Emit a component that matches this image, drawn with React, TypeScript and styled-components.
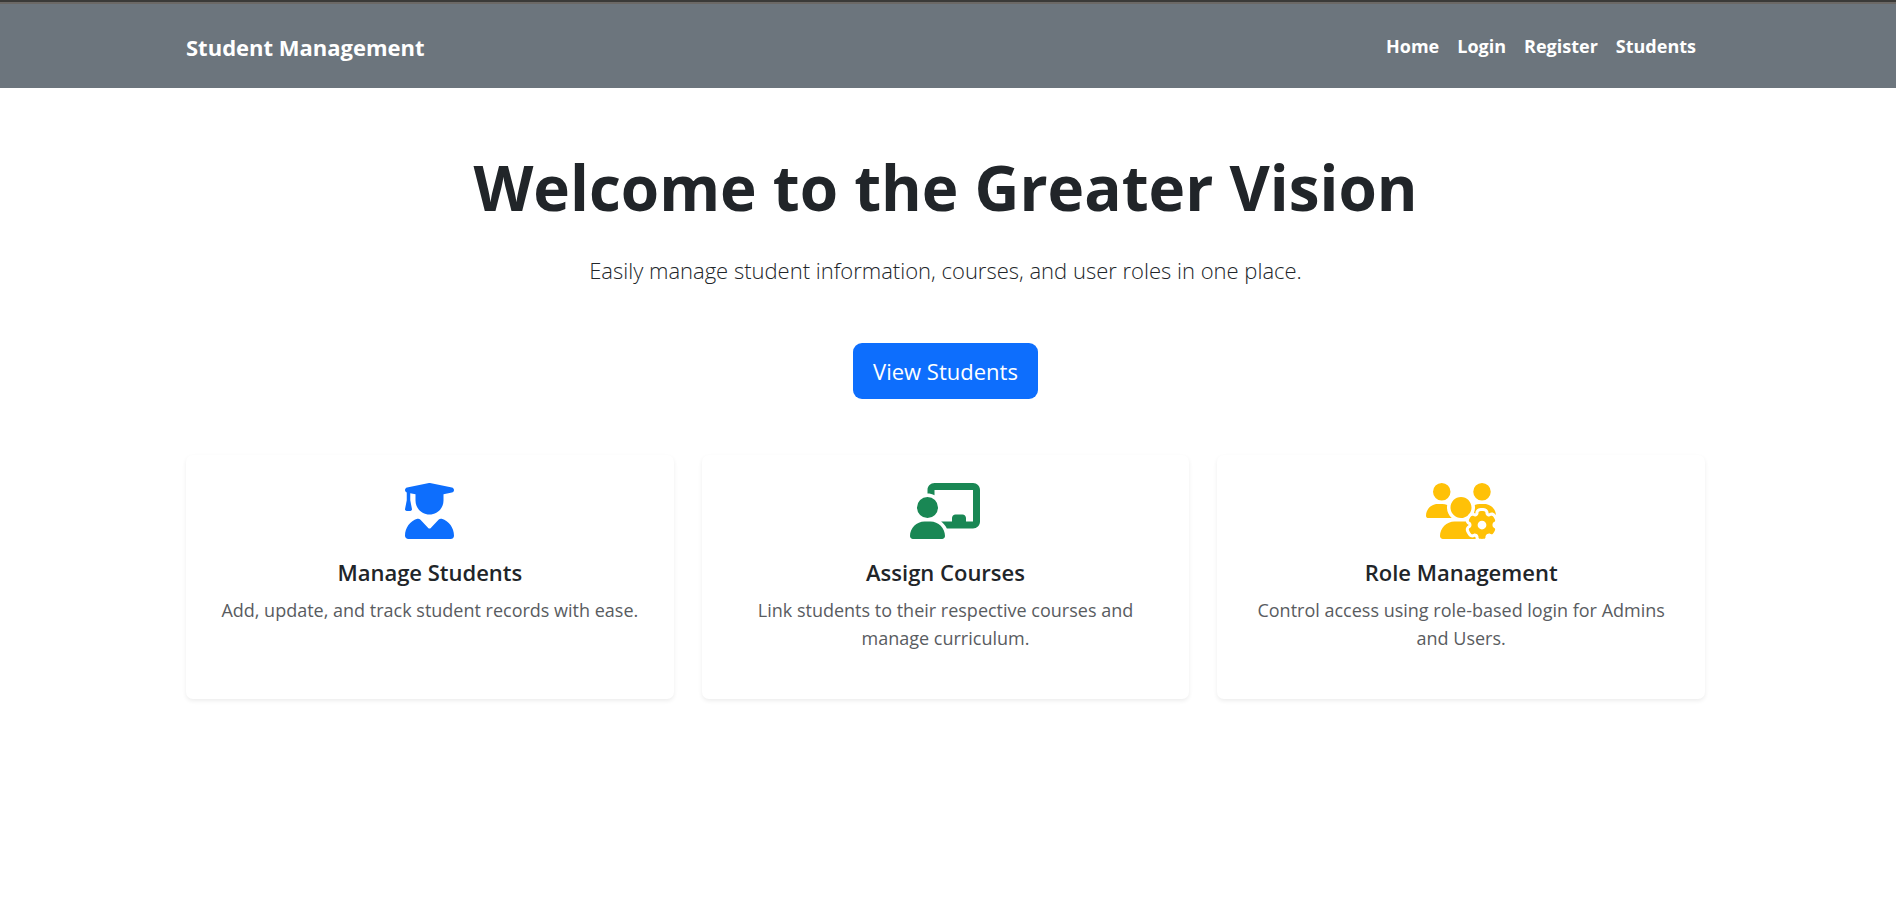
import React from "react";
import styled, { createGlobalStyle } from "styled-components";
import { FaUserGraduate, FaChalkboardUser, FaUsersGear } from "react-icons/fa6";

const GlobalStyle = createGlobalStyle`
  *, *::before, *::after { box-sizing: border-box; }
  body {
    margin: 0;
    font-family: "Segoe UI", "Open Sans", "Noto Sans", sans-serif;
    font-size: 18px;
    line-height: 28px;
    color: #212529;
    background: #fff;
  }
`;

const Page = styled.div`
  min-height: 100vh;
  padding-right: 5px;
`;

const Container = styled.div`
  width: 100%;
  max-width: 1547px;
  margin: 0 auto;
  padding: 0 14px;
`;

const Main = styled(Container).attrs({ as: "main" })`
  padding-bottom: 28px;
`;

const Header = styled.header`
  margin-right: -5px;
  padding-right: 5px;
  background: #6c757d;
  border-top: 2px solid #3a3a38;
  box-shadow: inset 0 2px 0 #6b6865;
`;

const NavBar = styled(Container).attrs({ as: "nav" })`
  display: flex;
  align-items: center;
  justify-content: space-between;
  padding-top: 30px;
  padding-bottom: 26px;
`;

const Brand = styled.a`
  color: #fff;
  font-size: 22px;
  font-weight: 700;
  text-decoration: none;
`;

const NavList = styled.ul`
  display: flex;
  gap: 18px;
  margin: 0;
  padding: 0 9px 2px;
  list-style: none;
`;

const NavLink = styled.a`
  color: #fff;
  font-weight: 700;
  text-decoration: none;
`;

const Hero = styled.section`
  display: flex;
  flex-direction: column;
  align-items: center;
  padding: 60px 0 56px;
  text-align: center;
`;

const Title = styled.h1`
  margin: 0 0 27px;
  font-size: 62px;
  line-height: 78px;
  font-weight: 700;
`;

const Lead = styled.p`
  margin: 0 0 56px;
  font-size: 22px;
  line-height: 34px;
  font-weight: 300;
`;

const PrimaryButton = styled.button`
  padding: 10px 20px;
  border: 0;
  border-radius: 9px;
  background: #0d6efd;
  color: #fff;
  font: inherit;
  font-size: 22px;
  line-height: 36px;
`;

const CardGrid = styled.section`
  display: grid;
  grid-template-columns: repeat(3, 1fr);
  gap: 28px;
`;

const Card = styled.article`
  display: flex;
  flex-direction: column;
  align-items: center;
  min-height: 244px;
  padding: 28px;
  border-radius: 7px;
  box-shadow: 0 2px 4px rgba(0, 0, 0, 0.075);
  text-align: center;
`;

const CardIcon = styled.span<{ $color: string; $wide: boolean }>`
  display: flex;
  margin-bottom: 19px;
  color: ${({ $color }) => $color};

  svg {
    width: ${({ $wide }) => ($wide ? 70 : 49)}px;
    height: 56px;
  }
`;

const CardTitle = styled.h2`
  margin: 0 0 10px;
  font-size: 22px;
  line-height: 28px;
  font-weight: 600;
`;

const CardText = styled.p`
  margin: 0;
  color: #595c5f;
`;

const links = ["Home", "Login", "Register", "Students"];

const features = [
  { Icon: FaUserGraduate, wide: false, color: "#0d6efd", title: "Manage Students", text: "Add, update, and track student records with ease." },
  { Icon: FaChalkboardUser, wide: true, color: "#198754", title: "Assign Courses", text: "Link students to their respective courses and manage curriculum." },
  { Icon: FaUsersGear, wide: true, color: "#ffc107", title: "Role Management", text: "Control access using role-based login for Admins and Users." },
];

export default function App() {
  return (
    <Page>
      <GlobalStyle />
      <Header>
        <NavBar>
          <Brand href="#">Student Management</Brand>
          <NavList>
            {links.map((label) => (
              <li key={label}>
                <NavLink href="#">{label}</NavLink>
              </li>
            ))}
          </NavList>
        </NavBar>
      </Header>
      <Main>
        <Hero>
          <Title>Welcome to the Greater Vision</Title>
          <Lead>Easily manage student information, courses, and user roles in one place.</Lead>
          <PrimaryButton type="button">View Students</PrimaryButton>
        </Hero>
        <CardGrid>
          {features.map(({ Icon, wide, color, title, text }) => (
            <Card key={title}>
              <CardIcon $color={color} $wide={wide}>
                <Icon aria-hidden="true" />
              </CardIcon>
              <CardTitle>{title}</CardTitle>
              <CardText>{text}</CardText>
            </Card>
          ))}
        </CardGrid>
      </Main>
    </Page>
  );
}
